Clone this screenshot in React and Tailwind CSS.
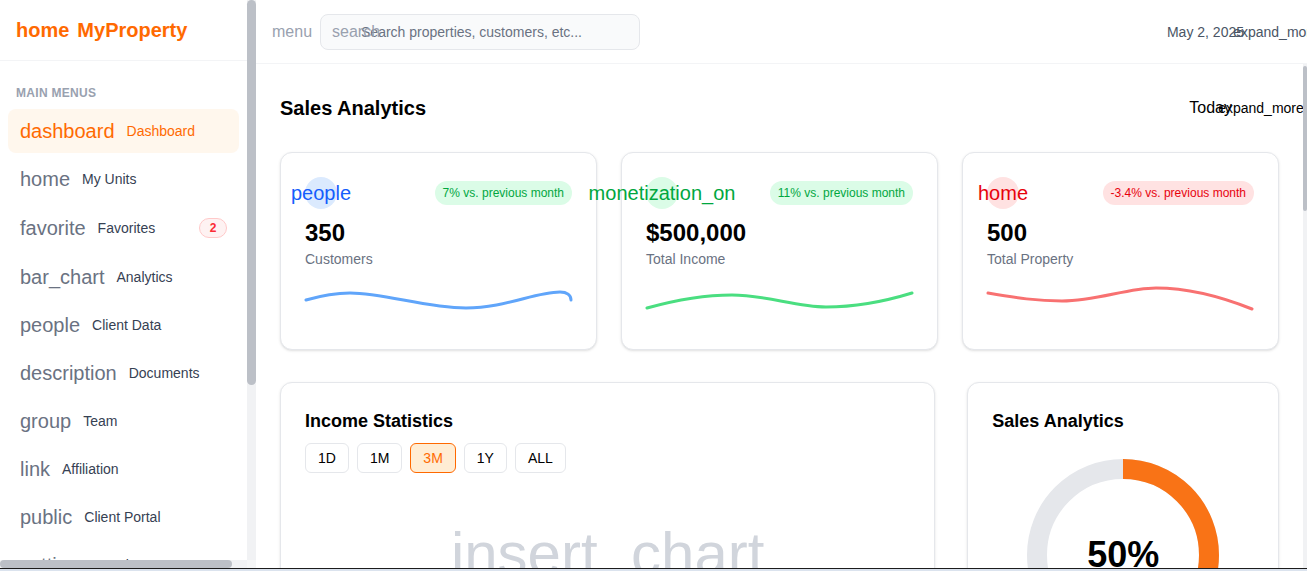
import React from "react";

const navItems = [
  { icon: "dashboard", label: "Dashboard", active: true },
  { icon: "home", label: "My Units" },
  { icon: "favorite", label: "Favorites", badge: 2, tall: true },
  { icon: "bar_chart", label: "Analytics", tall: true },
  { icon: "people", label: "Client Data" },
  { icon: "description", label: "Documents" },
  { icon: "group", label: "Team" },
  { icon: "link", label: "Affiliation" },
  { icon: "public", label: "Client Portal" },
  { icon: "settings", label: "Settings" },
  { icon: "help", label: "Help Center" },
  { icon: "logout", label: "Logout" },
];

const stats = [
  {
    iconName: "people",
    value: "350",
    label: "Customers",
    change: "7% vs. previous month",
    circle: "bg-blue-100 text-blue-600",
    pill: "bg-green-100 text-green-600",
    stroke: "#60a5fa",
    d: "M1 15 C15 11 30 8 45 8 C80 8 120 23 161 23 C200 23 230 7 255 7 C262 7 266 10 266 15",
  },
  {
    iconName: "monetization_on",
    value: "$500,000",
    label: "Total Income",
    change: "11% vs. previous month",
    circle: "bg-green-100 text-green-600",
    pill: "bg-green-100 text-green-600",
    stroke: "#4ade80",
    d: "M1 23 C30 15 60 10 86 10 C120 10 150 22 180 22 C210 22 240 16 266 8",
  },
  {
    iconName: "home",
    value: "500",
    label: "Total Property",
    change: "-3.4% vs. previous month",
    circle: "bg-red-100 text-red-600",
    pill: "bg-red-100 text-red-600",
    stroke: "#f87171",
    d: "M1 8 C30 13 50 16 75 16 C110 16 140 3 169 3 C200 3 230 10 265 24",
  },
];

const ranges = ["1D", "1M", "3M", "1Y", "ALL"];

const transactions = [
  { name: "Sunset Villa", client: "Maria Lopez", amount: "$120,000", status: "Paid" },
  { name: "Ocean View Apt.", client: "James Carter", amount: "$85,000", status: "Pending" },
  { name: "Green Park Unit 4", client: "Aiko Tanaka", amount: "$64,500", status: "Paid" },
  { name: "Hillside House", client: "Daniel Smith", amount: "$230,000", status: "Overdue" },
];

function Sidebar() {
  return (
    <aside className="w-64 shrink-0 h-full bg-white flex flex-col">
      <div className="flex-1 min-h-0 flex">
        <div className="flex-1 min-w-0 overflow-hidden">
          <div className="h-[61px] border-b border-gray-100 px-4 flex items-center gap-2 text-xl font-bold text-orange-500">
            <span>home</span>
            <span>MyProperty</span>
          </div>

          <nav className="px-2 pt-6">
            <div className="px-2 mb-2 text-xs font-semibold uppercase tracking-wide text-gray-400">
              Main Menus
            </div>
            <ul className="flex flex-col gap-1">
              {navItems.map((item) => (
                <li
                  key={item.label}
                  className={
                    item.active
                      ? "flex items-center gap-3 px-3 py-2 rounded-lg bg-orange-50"
                      : item.tall
                      ? "flex items-center gap-3 px-3 py-2 min-h-[45px] rounded-lg"
                      : "flex items-center gap-3 px-3 py-2 rounded-lg"
                  }
                >
                  <span className={item.active ? "text-xl leading-7 text-orange-500" : "text-xl leading-7 text-gray-500"}>
                    {item.icon}
                  </span>
                  <span className={item.active ? "text-sm text-orange-500" : "text-sm text-gray-700"}>
                    {item.label}
                  </span>
                  {item.badge && (
                    <span className="ml-auto h-5 min-w-7 px-2 rounded-full border border-red-200 bg-red-50 text-red-500 text-xs font-bold flex items-center justify-center">
                      {item.badge}
                    </span>
                  )}
                </li>
              ))}
            </ul>
          </nav>
        </div>
        {/* vertical scrollbar */}
        <div className="w-[9px] shrink-0 bg-[#f1f2f4]">
          <div className="h-[385px] rounded-full bg-[#bcc0c7]"></div>
        </div>
      </div>
      {/* horizontal scrollbar */}
      <div className="h-2 shrink-0 flex">
        <div className="flex-1 bg-[#f1f2f4]">
          <div className="w-[232px] h-full rounded-full bg-[#bcc0c7]"></div>
        </div>
        <div className="w-[9px] bg-[#f5f6f7]"></div>
      </div>
    </aside>
  );
}

function Header() {
  return (
    <header className="h-16 shrink-0 border-b border-gray-100 pl-4 pr-[21px] flex items-center">
      <span className="text-base text-gray-400 mr-2">menu</span>
      <div className="relative w-80">
        <span className="absolute left-3 top-1/2 -translate-y-1/2 text-base text-gray-400">search</span>
        <div className="h-9 pl-10 pr-3 flex items-center rounded-lg border border-gray-200 bg-gray-50 text-sm text-gray-500">
          Search properties, customers, etc...
        </div>
      </div>
      <div className="ml-auto flex items-center text-sm text-gray-600">
        <span>May 2, 2025</span>
        <span className="w-5 ml-[22px] flex justify-center whitespace-nowrap">expand_more</span>
      </div>
    </header>
  );
}

function StatCard({ stat }) {
  return (
    <div className="rounded-xl border border-gray-200 bg-white shadow-sm p-6">
      <div className="flex items-center justify-between">
        <div className={`w-8 h-8 rounded-full flex items-center justify-center whitespace-nowrap text-xl ${stat.circle}`}>
          {stat.iconName}
        </div>
        <span className={`px-2 py-1 rounded-full text-xs ${stat.pill}`}>{stat.change}</span>
      </div>
      <div className="mt-2 text-2xl font-bold">{stat.value}</div>
      <div className="text-sm text-gray-500">{stat.label}</div>
      <svg className="mt-4 w-full h-10 overflow-visible" viewBox="0 0 267 40" preserveAspectRatio="none">
        <path d={stat.d} fill="none" stroke={stat.stroke} strokeWidth="3" strokeLinecap="round" />
      </svg>
    </div>
  );
}

function IncomeCard() {
  return (
    <div className="col-span-2 h-[430px] rounded-xl border border-gray-200 bg-white shadow-sm p-6">
      <h3 className="text-lg font-bold">Income Statistics</h3>
      <div className="mt-2 flex gap-2">
        {ranges.map((r) =>
          r === "3M" ? (
            <button key={r} className="px-3 py-1 rounded-md border border-orange-500 bg-orange-100 text-sm text-orange-500">
              {r}
            </button>
          ) : (
            <button key={r} className="px-3 py-1 rounded-md border border-gray-200 bg-white text-sm">
              {r}
            </button>
          )
        )}
      </div>
      <div className="pt-[51px] flex justify-center">
        <span className="text-6xl text-gray-300">insert_chart</span>
      </div>
    </div>
  );
}

function SalesDonut() {
  const r = 86;
  const c = 2 * Math.PI * r;
  return (
    <div className="h-[430px] rounded-xl border border-gray-200 bg-white shadow-sm p-6">
      <h3 className="text-lg font-bold">Sales Analytics</h3>
      <div className="relative w-48 h-48 mx-auto mt-6">
        <svg viewBox="0 0 192 192" className="w-48 h-48 -rotate-90">
          <circle cx="96" cy="96" r={r} fill="none" stroke="#e5e7eb" strokeWidth="20" />
          <circle
            cx="96"
            cy="96"
            r={r}
            fill="none"
            stroke="#f97316"
            strokeWidth="20"
            strokeDasharray={c}
            strokeDashoffset={c / 2}
          />
        </svg>
        <div className="absolute inset-0 flex items-center justify-center text-4xl font-bold">50%</div>
      </div>
      <div className="mt-6 flex justify-center gap-6 text-sm text-gray-600">
        <span className="flex items-center gap-2">
          <span className="w-3 h-3 rounded-full bg-orange-500"></span>Sold
        </span>
        <span className="flex items-center gap-2">
          <span className="w-3 h-3 rounded-full bg-gray-200"></span>Available
        </span>
      </div>
    </div>
  );
}

function Transactions() {
  return (
    <div className="mt-8 rounded-xl border border-gray-200 bg-white shadow-sm p-6">
      <h3 className="text-lg font-bold mb-4">Recent Transactions</h3>
      <table className="w-full text-sm">
        <thead>
          <tr className="text-left text-gray-500 border-b border-gray-100">
            <th className="py-3 font-medium">Property</th>
            <th className="py-3 font-medium">Client</th>
            <th className="py-3 font-medium">Amount</th>
            <th className="py-3 font-medium">Status</th>
          </tr>
        </thead>
        <tbody>
          {transactions.map((t) => (
            <tr key={t.name} className="border-b border-gray-100">
              <td className="py-4">{t.name}</td>
              <td className="py-4 text-gray-600">{t.client}</td>
              <td className="py-4 font-semibold">{t.amount}</td>
              <td className="py-4 text-gray-600">{t.status}</td>
            </tr>
          ))}
        </tbody>
      </table>
    </div>
  );
}

export default function App() {
  return (
    <div className="h-[571px] w-full flex flex-col overflow-hidden bg-white text-black font-['Liberation_Sans',Arial,sans-serif]">
      <div className="h-[568px] flex">
        <Sidebar />
        <div className="flex-1 min-w-0 flex flex-col">
          <Header />
          <div className="flex-1 min-h-0 flex">
            <main className="flex-1 min-w-0 overflow-hidden">
              <div className="p-6">
                <div className="flex items-center justify-between mb-6">
                  <h2 className="text-xl font-bold">Sales Analytics</h2>
                  <div className="h-10 flex items-center pr-2">
                    <span className="text-base">Today</span>
                    <span className="w-5 ml-[19px] flex justify-center whitespace-nowrap text-sm">expand_more</span>
                  </div>
                </div>

                <div className="grid grid-cols-3 gap-6">
                  {stats.map((s) => (
                    <StatCard key={s.label} stat={s} />
                  ))}
                </div>

                <div className="mt-8 grid grid-cols-3 gap-8">
                  <IncomeCard />
                  <SalesDonut />
                </div>

                <Transactions />
              </div>
            </main>
            {/* page scrollbar */}
            <div className="w-1 shrink-0 bg-[#f1f2f4] pt-[2px]">
              <div className="h-[145px] rounded-full bg-[#bcc0c7]"></div>
            </div>
          </div>
        </div>
      </div>
      <div className="h-px shrink-0 bg-[#1c1c1c]"></div>
      <div className="h-[2px] shrink-0 bg-[#dbe3ee]"></div>
    </div>
  );
}
